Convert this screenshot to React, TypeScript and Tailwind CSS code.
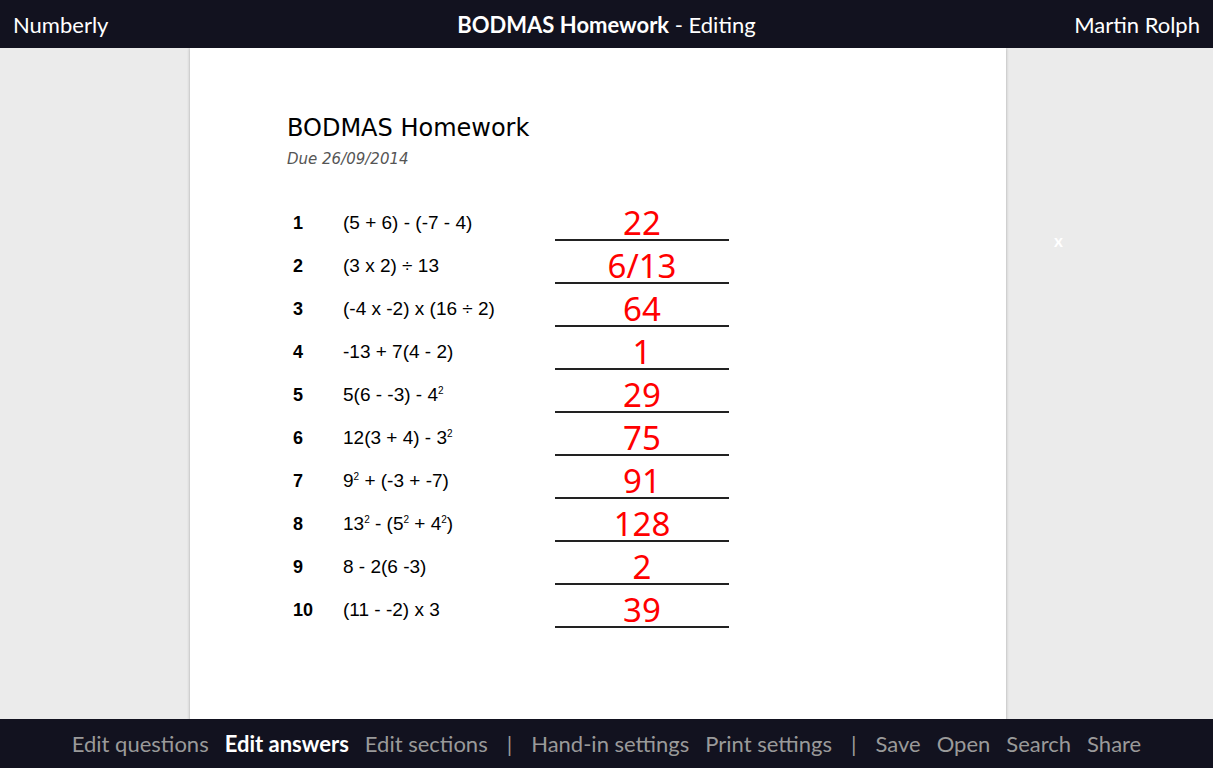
import React from "react";

const Sup = ({ children }: { children: React.ReactNode }) => (
  <sup className="text-[10px] -top-[7px]">{children}</sup>
);

const questions: { n: string; q: React.ReactNode; a: string }[] = [
  { n: "1", q: "(5 + 6) - (-7 - 4)", a: "22" },
  { n: "2", q: "(3 x 2) ÷ 13", a: "6/13" },
  { n: "3", q: "(-4 x -2) x (16 ÷ 2)", a: "64" },
  { n: "4", q: "-13 + 7(4 - 2)", a: "1" },
  { n: "5", q: <>5(6 - -3) - 4<Sup>2</Sup></>, a: "29" },
  { n: "6", q: <>12(3 + 4) - 3<Sup>2</Sup></>, a: "75" },
  { n: "7", q: <>9<Sup>2</Sup> + (-3 + -7)</>, a: "91" },
  {
    n: "8",
    q: (
      <>
        13<Sup>2</Sup> - (5<Sup>2</Sup> + 4<Sup>2</Sup>)
      </>
    ),
    a: "128",
  },
  { n: "9", q: "8 - 2(6 -3)", a: "2" },
  { n: "10", q: "(11 - -2) x 3", a: "39" },
];

const navItems: { label: string; active?: boolean; sep?: boolean }[] = [
  { label: "Edit questions" },
  { label: "Edit answers", active: true },
  { label: "Edit sections" },
  { label: "|", sep: true },
  { label: "Hand-in settings" },
  { label: "Print settings" },
  { label: "|", sep: true },
  { label: "Save" },
  { label: "Open" },
  { label: "Search" },
  { label: "Share" },
];

export default function App() {
  return (
    <div
      className="flex h-screen w-full flex-col overflow-hidden bg-[#ebebeb]"
      style={{ fontFamily: "Lato, 'Noto Sans', sans-serif" }}
    >
      <header className="flex h-[48px] shrink-0 items-center justify-between bg-[#12121f] px-[13px] text-[22px] text-white">
        <span className="w-[200px]">Numberly</span>
        <span>
          <span className="font-bold">BODMAS Homework</span> - Editing
        </span>
        <span className="w-[200px] text-right">Martin Rolph</span>
      </header>

      <main className="flex flex-1 justify-start overflow-hidden pl-[190px]">
        <div className="relative h-[1056px] w-[816px] shrink-0 bg-white pl-[97px] pt-[65px] shadow-[0_0_3px_rgba(0,0,0,0.3)]">
          <h1
            className="text-[24px] leading-[30px] text-black"
            style={{ fontFamily: "'DejaVu Sans', Verdana, sans-serif" }}
          >
            BODMAS Homework
          </h1>
          <p
            className="mt-[7px] text-[15px] italic leading-[18px] text-[#555]"
            style={{ fontFamily: "'DejaVu Sans', Verdana, sans-serif" }}
          >
            Due 26/09/2014
          </p>

          <div className="mt-[30px] flex flex-col" style={{ fontFamily: "'Liberation Sans', Arial, sans-serif" }}>
            {questions.map((r) => (
              <div key={r.n} className="flex h-[43px] items-end">
                <div className="w-[56px] pb-[9px] pl-[6px] text-[18px] font-bold leading-none text-black">{r.n}</div>
                <div className="w-[212px] pb-[9px] text-[19px] leading-none text-black">{r.q}</div>
                <div className="flex h-full w-[174px] items-end justify-center border-b-2 border-[#222]">
                  <span
                    className="text-[33px] leading-none text-[#ff0000]"
                    style={{ fontFamily: "'Noto Sans', sans-serif" }}
                  >
                    {r.a}
                  </span>
                </div>
              </div>
            ))}
          </div>

          <span className="absolute left-[864px] top-[184px] text-[17px] font-bold leading-none text-white">x</span>
        </div>
      </main>

      <footer className="flex h-[49px] shrink-0 items-center justify-center gap-[16px] bg-[#12121f] text-[22px]">
        {navItems.map((it, i) => (
          <span
            key={i}
            className={
              it.active
                ? "font-bold text-white"
                : it.sep
                ? "px-[3px] text-[#9a9a9a]"
                : "text-[#9a9a9a]"
            }
          >
            {it.label}
          </span>
        ))}
      </footer>
    </div>
  );
}
